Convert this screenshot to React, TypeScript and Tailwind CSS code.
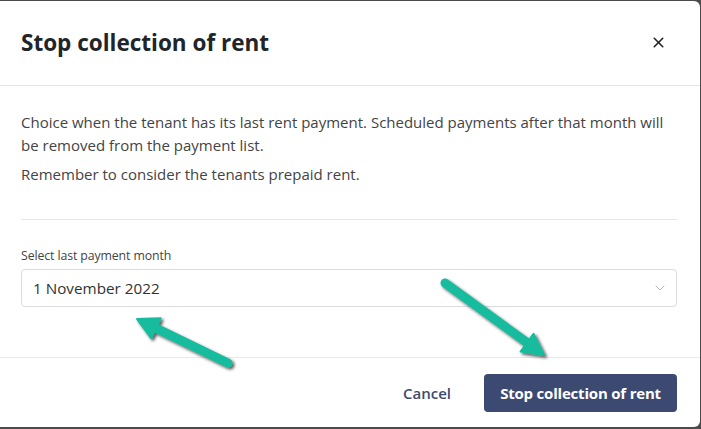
import { X, ChevronDown } from 'lucide-react';

function Arrow({ tail, tip }: { tail: [number, number]; tip: [number, number] }) {
  const dx = tip[0] - tail[0];
  const dy = tip[1] - tail[1];
  const len = Math.hypot(dx, dy);
  const ux = dx / len;
  const uy = dy / len;
  const bx = tip[0] - 21 * ux;
  const by = tip[1] - 21 * uy;
  const px = -uy * 11;
  const py = ux * 11;
  return (
    <g filter="url(#arrow-shadow)">
      <line
        x1={tail[0]}
        y1={tail[1]}
        x2={bx + 4 * ux}
        y2={by + 4 * uy}
        stroke="#19bc9d"
        strokeWidth={9}
        strokeLinecap="round"
      />
      <polygon
        points={`${tip[0]},${tip[1]} ${bx + px},${by + py} ${bx - px},${by - py}`}
        fill="#19bc9d"
        stroke="#19bc9d"
        strokeWidth={2}
        strokeLinejoin="round"
      />
    </g>
  );
}

export default function App() {
  return (
    <div
      className="relative w-[701px] h-[429px] overflow-hidden bg-[#4b4b4b] pt-[1px]"
      style={{ fontFamily: '"Open Sans", "Noto Sans", Arial, sans-serif' }}
    >
      <div className="w-[700px] h-[426px] bg-white rounded-r-[6px] flex flex-col">
        <div className="h-[85px] border-b border-[#e5e5e5] flex items-center justify-between pl-[21px] pr-[33px] pb-[1px]">
          <h2 className="text-[22.5px] font-bold text-[#212529]">Stop collection of rent</h2>
          <button className="text-[#222]">
            <X size={17} strokeWidth={2.2} />
          </button>
        </div>

        <div className="px-[21px] pt-[25px] h-[272px] border-b border-[#e9e9e9]">
          <p className="text-[15px] leading-[23px] text-[#444]">
            Choice when the tenant has its last rent payment. Scheduled payments after that month will
            be removed from the payment list.
          </p>
          <p className="mt-[6px] text-[15px] leading-[23px] text-[#444]">
            Remember to consider the tenants prepaid rent.
          </p>
          <div className="mt-[33px] border-t border-[#e6e6e6] w-[656px]" />
          <label className="block mt-[27px] text-[12.3px] leading-[18px] text-[#444] tracking-[-0.1px]">
            Select last payment month
          </label>
          <div className="mt-[4px] w-[656px] h-[38px] border border-[#dcdcdc] rounded-[4px] flex items-center justify-between pl-[11px] pr-[8px]">
            <span className="text-[15.25px] text-[#333]">1 November 2022</span>
            <ChevronDown size={16} strokeWidth={1.3} className="text-[#aaa]" />
          </div>
        </div>

        <div className="flex items-center justify-end gap-[33px] pr-[23px] pt-[16px]">
          <button className="text-[15px] font-semibold text-[#3c4a72]">Cancel</button>
          <button className="h-[38px] w-[193px] rounded-[4px] bg-[#3c4a72] text-white text-[15px] font-bold tracking-[-0.2px]">
            Stop collection of rent
          </button>
        </div>
      </div>

      <svg className="absolute inset-0 pointer-events-none" width={701} height={429}>
        <defs>
          <filter id="arrow-shadow" x="-20%" y="-20%" width="140%" height="140%">
            <feDropShadow dx="2" dy="2" stdDeviation="1.5" floodColor="#222" floodOpacity="0.75" />
          </filter>
        </defs>
        <Arrow tail={[228, 363]} tip={[137, 319]} />
        <Arrow tail={[445, 283]} tip={[544, 355]} />
      </svg>
    </div>
  );
}
